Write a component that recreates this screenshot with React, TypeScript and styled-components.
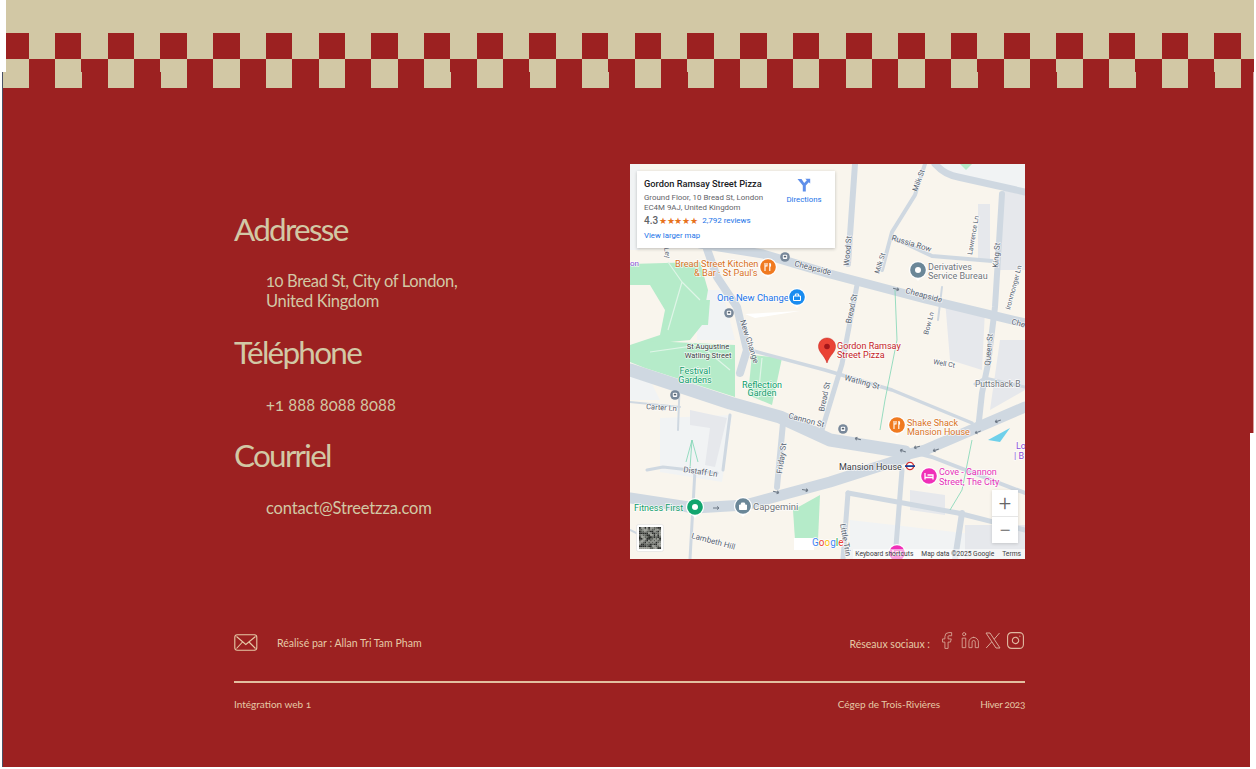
import React from "react";
import styled, { createGlobalStyle } from "styled-components";
import { Facebook, Linkedin, Instagram } from "lucide-react";

const RED = "#9c2121";
const BEIGE = "#d2c8a5";
const SOFT = "#e6c9a6";

const GlobalStyle = createGlobalStyle`
  html, body {
    margin: 0;
    padding: 0;
    background: #fff;
  }
  body {
    font-family: "Lato", "Liberation Sans", sans-serif;
  }
`;

const Page = styled.div`
  width: 1254px;
  height: 767px;
  display: flex;
  flex-direction: column;
`;

const Band = styled.div`
  height: 33px;
  margin-left: 6px;
  background: ${BEIGE};
`;

const checks = (a: string, b: string, offset: number) =>
  `repeating-linear-gradient(90deg, ${a} ${offset}px, ${a} ${offset + 26.35}px, ${b} ${offset + 26.35}px, ${b} ${offset + 52.7}px)`;

const CheckRow = styled.div<{ $h: number; $left: number; $a: string; $b: string; $offset: number }>`
  height: ${(p) => p.$h}px;
  margin-left: ${(p) => p.$left}px;
  background-color: ${(p) => p.$a};
  background-image: ${(p) => checks(p.$a, p.$b, p.$offset)};
`;

const FooterWrap = styled.footer`
  position: relative;
  flex: 1;
  margin-left: 2px;
  background: ${RED};
  border-left: 1px solid #4a5266;
  border-right: 1px solid #d99a9a;
  display: flex;
  flex-direction: column;
`;

const Notch = styled.div`
  position: absolute;
  right: -1px;
  top: 361px;
  bottom: 0;
  width: 4px;
  background: #fff;
`;

const Inner = styled.div`
  width: 791px;
  margin-left: 231px;
  display: flex;
  flex-direction: column;
`;

const Main = styled.div`
  display: flex;
  justify-content: space-between;
  margin-top: 76px;
`;

const Contact = styled.div`
  padding-top: 46px;
  display: flex;
  flex-direction: column;
  gap: 22px;
  color: ${BEIGE};
`;

const Heading = styled.h2`
  margin: 0;
  font-size: 31.5px;
  line-height: 38px;
  font-weight: 400;
  letter-spacing: -1.75px;
`;

const Detail = styled.p<{ $top: number; $bottom?: number; $track: number }>`
  margin: ${(p) => p.$top}px 0 ${(p) => p.$bottom ?? 0}px 32px;
  font-size: 16.5px;
  line-height: 20px;
  font-weight: 400;
  letter-spacing: ${(p) => p.$track}px;
  font-variant-numeric: oldstyle-nums;
`;

const MapFrame = styled.div`
  position: relative;
  width: 395px;
  height: 395px;
  overflow: hidden;
  background: #f9f5ed;
  font-family: "Roboto", "Liberation Sans", sans-serif;
`;

const MapArt = styled.svg`
  display: block;
  width: 395px;
  height: 395px;
`;

const InfoCard = styled.div`
  position: absolute;
  left: 7px;
  top: 7px;
  width: 198px;
  height: 77px;
  box-sizing: border-box;
  padding: 7px 7px;
  background: #fff;
  box-shadow: 0 1px 3px rgba(60, 64, 67, 0.3);
  display: flex;
  justify-content: space-between;
`;

const CardText = styled.div`
  display: flex;
  flex-direction: column;
`;

const PlaceName = styled.div`
  font-size: 9.25px;
  line-height: 12px;
  font-weight: 500;
  color: #202124;
  white-space: nowrap;
`;

const PlaceAddress = styled.div`
  margin-top: 3px;
  font-size: 7.9px;
  line-height: 10px;
  color: #5f6368;
  white-space: nowrap;
`;

const RatingRow = styled.div`
  margin-top: 1px;
  display: flex;
  align-items: center;
  height: 13px;
  font-size: 8px;
  color: #1a73e8;
`;

const Score = styled.span`
  font-size: 10px;
  font-weight: 500;
  color: #5f6368;
  margin-right: 1px;
`;

const Stars = styled.span`
  font-size: 8.6px;
  letter-spacing: -0.4px;
  color: #e7711b;
  margin-right: 5px;
`;

const MapLink = styled.div`
  margin-top: 4px;
  font-size: 7.8px;
  line-height: 10px;
  color: #1a73e8;
`;

const Directions = styled.div`
  width: 44px;
  display: flex;
  flex-direction: column;
  align-items: center;
  font-size: 7.8px;
  color: #1a73e8;
  gap: 3px;
  padding-right: 2px;
`;

const ZoomBox = styled.div`
  position: absolute;
  left: 362px;
  top: 326px;
  width: 26px;
  height: 53px;
  background: #fff;
  box-shadow: 0 1px 3px rgba(0, 0, 0, 0.15);
  display: flex;
  flex-direction: column;
`;

const ZoomButton = styled.div`
  flex: 1;
  display: flex;
  align-items: center;
  justify-content: center;
  font-size: 22px;
  font-weight: 300;
  color: #666;
  & + & {
    border-top: 1px solid #e6e6e6;
  }
`;

const Attribution = styled.div`
  position: absolute;
  right: 0;
  bottom: 0;
  height: 10px;
  display: flex;
  gap: 8px;
  padding: 0 4px 0 2px;
  background: rgba(255, 255, 255, 0.55);
  font-size: 6.7px;
  line-height: 10px;
  color: #3c4043;
  white-space: nowrap;
`;

const SocialRow = styled.div`
  display: flex;
  justify-content: space-between;
  align-items: center;
  height: 20px;
  margin-top: 73px;
  color: ${SOFT};
  font-size: 10.55px;
`;

const Credit = styled.div`
  display: flex;
  align-items: center;
  gap: 19px;
`;

const CreditText = styled.span`
  padding-top: 2px;
`;

const Socials = styled.div`
  display: flex;
  align-items: center;
  gap: 5px;
  margin-top: -4px;
`;

const SocialLabel = styled.span`
  margin: 8px 2px 0 0;
  font-size: 10.5px;
`;

const Rule = styled.hr`
  width: 100%;
  height: 2px;
  margin: 29px 0 0;
  border: 0;
  background: #e3bfa0;
`;

const BottomRow = styled.div`
  display: flex;
  justify-content: space-between;
  margin-top: 14px;
  font-size: 10px;
  line-height: 14px;
  color: ${SOFT};
  font-variant-numeric: oldstyle-nums;
`;

const RightGroup = styled.div`
  display: flex;
  gap: 40px;
`;

const Season = styled.span`
  letter-spacing: -0.3px;
`;

type Road = { d: string; w: number };

const roads: Road[] = [
  { d: "M700 244L763 254L830 274L925 299L1025 323", w: 9 },
  { d: "M935 164Q945 175 958 177L1025 192", w: 7 },
  { d: "M855 164L848 264", w: 6 },
  { d: "M857 285L842 364L822 430", w: 5 },
  { d: "M925 164L915 195L892 232L882 270", w: 4 },
  { d: "M892 237L932 256L992 261", w: 4 },
  { d: "M1002 194L995 307L988 364L982 393L978 430", w: 6 },
  { d: "M630 370L730 403L780 417L830 440L905 452", w: 13 },
  { d: "M905 455L925 450L1025 407", w: 11 },
  { d: "M630 498L695 508L745 505L830 482L905 458", w: 11 },
  { d: "M905 450L932 457L1025 493", w: 4 },
  { d: "M848 493L958 513L1025 530", w: 5 },
  { d: "M902 470L895 559", w: 5 },
  { d: "M962 513L955 559", w: 6 },
  { d: "M848 493L843 559", w: 5 },
  { d: "M707 249L717 277L737 307L747 350L740 373", w: 8 },
  { d: "M783 423L777 487", w: 6 },
  { d: "M730 415L723 470", w: 3 },
  { d: "M647 470L663 467L717 473", w: 3 },
  { d: "M695 470L690 559", w: 3 },
  { d: "M750 350L825 370L892 390L972 423", w: 3.5 },
  { d: "M1025 387L985 378L975 384", w: 3 },
  { d: "M630 402L680 407", w: 2 },
  { d: "M680 375L678 430", w: 2 },
  { d: "M942 287L938 320", w: 2 },
  { d: "M630 530L650 540", w: 2 },
];

type Label = {
  t: string;
  x: number;
  y: number;
  s?: number;
  c?: string;
  r?: number;
  mid?: boolean;
};

const ROAD_INK = "#56616e";
const ORANGE = "#d9731f";
const GREEN = "#0f9d6b";
const PINK = "#e62fb8";
const RED_INK = "#c5221f";
const GRAY_INK = "#70757a";

const labels: Label[] = [
  { t: "Bread Street Kitchen", x: 675, y: 267, s: 9.2, c: ORANGE },
  { t: "& Bar · St Paul's", x: 694, y: 276, s: 9.2, c: ORANGE },
  { t: "One New Change", x: 717, y: 301, s: 9.4, c: "#1a73e8" },
  { t: "St Augustine", x: 708, y: 349, s: 7.5, c: "#3c4043", mid: true },
  { t: "Watling Street", x: 708, y: 358, s: 7.5, c: "#3c4043", mid: true },
  { t: "Festival", x: 695, y: 374, s: 9, c: GREEN, mid: true },
  { t: "Gardens", x: 695, y: 383, s: 9, c: GREEN, mid: true },
  { t: "Reflection", x: 762, y: 388, s: 9, c: GREEN, mid: true },
  { t: "Garden", x: 762, y: 396, s: 9, c: GREEN, mid: true },
  { t: "Carter Ln", x: 646, y: 409, s: 7.5, r: 4 },
  { t: "Distaff Ln", x: 683, y: 472, s: 8, r: 8 },
  { t: "Fitness First", x: 634, y: 511, s: 9, c: GREEN },
  { t: "Capgemini", x: 753, y: 510, s: 9.5, c: GRAY_INK },
  { t: "Lambeth Hill", x: 691, y: 538, s: 8, r: 15 },
  { t: "Friday St", x: 782, y: 474, s: 8, r: -82 },
  { t: "Cannon St", x: 788, y: 418, s: 8, r: 15 },
  { t: "Wood St", x: 849, y: 266, s: 8, r: -85 },
  { t: "Bread St", x: 851, y: 324, s: 8, r: -78 },
  { t: "Bread St", x: 824, y: 412, s: 8, r: -78 },
  { t: "Milk St", x: 917, y: 192, s: 7.5, r: -70 },
  { t: "Milk St", x: 879, y: 274, s: 7, r: -72 },
  { t: "Russia Row", x: 891, y: 240, s: 8, r: 17 },
  { t: "Lawrence Ln", x: 972, y: 255, s: 7, r: -80 },
  { t: "King St", x: 998, y: 268, s: 8, r: -85 },
  { t: "Ironmonger Ln", x: 1010, y: 310, s: 7, r: -75 },
  { t: "Cheapside", x: 794, y: 266, s: 8, r: 14 },
  { t: "Cheapside", x: 905, y: 293, s: 8, r: 15 },
  { t: "Che", x: 1011, y: 324, s: 8, r: 15 },
  { t: "Bow Ln", x: 928, y: 335, s: 7, r: -75 },
  { t: "Queen St", x: 990, y: 366, s: 8, r: -85 },
  { t: "Well Ct", x: 933, y: 364, s: 7, r: 10 },
  { t: "Watling St", x: 844, y: 380, s: 8, r: 15 },
  { t: "Puttshack B", x: 975, y: 387, s: 8.5, c: GRAY_INK },
  { t: "Derivatives", x: 928, y: 270, s: 9, c: GRAY_INK },
  { t: "Service Bureau", x: 928, y: 279, s: 9, c: GRAY_INK },
  { t: "Gordon Ramsay", x: 837, y: 349, s: 9, c: RED_INK },
  { t: "Street Pizza", x: 837, y: 358, s: 9, c: RED_INK },
  { t: "Shake Shack", x: 907, y: 426, s: 9, c: ORANGE },
  { t: "Mansion House", x: 907, y: 435, s: 9, c: ORANGE },
  { t: "Mansion House", x: 839, y: 470, s: 9, c: "#3c4043" },
  { t: "Cove - Cannon", x: 939, y: 475, s: 9, c: PINK },
  { t: "Street, The City", x: 939, y: 485, s: 9, c: PINK },
  { t: "New Change", x: 740, y: 321, s: 8, r: 72 },
  { t: "Lo", x: 1016, y: 449, s: 9, c: "#8a4fd8" },
  { t: "| B", x: 1014, y: 459, s: 9, c: "#8a4fd8" },
  { t: "on", x: 630, y: 266, s: 8, c: "#8a4fd8" },
  { t: "Little Trin", x: 840, y: 524, s: 8, r: 80 },
  { t: "Ley", x: 664, y: 248, s: 7, r: 80 },
];

const markers = [
  { x: 768, y: 267, c: "#f07a20", g: "food" },
  { x: 797, y: 297, c: "#1a8cf0", g: "shop" },
  { x: 918, y: 270, c: "#6b8798", g: "dot" },
  { x: 897, y: 425, c: "#f07a20", g: "food" },
  { x: 929, y: 476, c: "#f02fb8", g: "bed" },
  { x: 695, y: 507, c: "#12a56e", g: "dot" },
  { x: 743, y: 506, c: "#6b8798", g: "shop" },
  { x: 897, y: 553, c: "#f02fb8", g: "bed" },
];

const transit = [
  [785, 257],
  [729, 313],
  [675, 395],
  [843, 429],
];

const arrows = [
  [896, 289, 196],
  [805, 490, 190],
  [776, 492, 195],
  [716, 508, 180],
  [858, 439, 15],
  [903, 451, 20],
  [917, 447, -15],
  [998, 421, -20],
  [978, 432, -22],
  [936, 450, -20],
  [1002, 518, 200],
];

// fake satellite thumbnail, a fixed pseudo-random mosaic
const thumb = Array.from({ length: 144 }, (_, i) => {
  const n = (i * i * 31 + i * 17 + (i % 13) * 211) % 97;
  return {
    x: 639 + (i % 12) * 1.83,
    y: 527 + Math.floor(i / 12) * 1.83,
    fill: n % 3 === 0 ? "#2b2d2a" : n % 3 === 1 ? "#5d605a" : "#8f918a",
  };
});

const MapDrawing: React.FC = () => (
  <MapArt viewBox="630 164 395 395" xmlns="http://www.w3.org/2000/svg">
    <rect x="630" y="164" width="395" height="395" fill="#f9f5ed" />
    {/* pale built-up blocks */}
    <g fill="#f1f3f4">
      <path d="M660 418L732 415L722 482L660 472Z" />
      <path d="M930 164H1025V195L958 178Z" />
      <path d="M850 520L1025 540V559H850Z" />
      <path d="M630 164H640V250H630Z" />
      <path d="M630 372L650 380L660 400H630Z" />
      <path d="M697 290L722 290L735 340H697Z" />
    </g>
    <g fill="#e6e8ec">
      <path d="M690 410L727 418L715 467L705 465L710 428L690 425Z" />
      <path d="M978 204H990V260H978Z" />
      <path d="M1003 190L1025 195V270H1000Z" />
      <path d="M945 300L985 310L982 370L950 360Z" />
      <path d="M910 490L945 495L945 515L910 510Z" />
      <path d="M1000 340H1025V390L990 410Z" />
      <path d="M965 525H1025V559H965Z" />
    </g>
    {/* parks */}
    <g fill="#b5ebc9">
      <path d="M630 264L700 262L708 290L702 325L690 340L640 345L630 352Z" />
      <path d="M630 340L735 345L735 397L645 368L630 362Z" />
      <path d="M752 355L782 358L772 405L748 395Z" />
      <path d="M793 510L820 495L818 540L795 540Z" />
      <path d="M960 164H972L966 170Z" />
    </g>
    <path d="M630 285L650 285L665 310L660 335L630 345Z" fill="#f9f5ed" />
    <path d="M700 300H710L708 325H700Z" fill="#b5ebc9" />
    <g fill="none" stroke="#dff5e7" strokeWidth="1.2">
      <path d="M668 262L682 282L668 330M682 282L700 300M650 352L700 345L730 370" />
      <path d="M762 358L758 398" />
    </g>
    <g fill="none" stroke="#cfd8e1" strokeLinecap="round" strokeLinejoin="round">
      {roads.map((r, i) => (
        <path key={i} d={r.d} strokeWidth={r.w} />
      ))}
    </g>
    <g fill="none" stroke="#7fd6b4" strokeWidth="0.8">
      <path d="M895 290L897 340L885 400L880 430" />
      <path d="M972 440L962 490L950 510" />
      <path d="M692 440L690 468M692 440L698 462M692 440L686 462" />
    </g>
    <path d="M745 314L800 311L755 318Z" fill="#fff" />
    <path d="M988 440L1010 428L1000 442Z" fill="#6fd0ea" />
    {arrows.map(([x, y, r], i) => (
      <path
        key={i}
        d="M-3 0H3M-3 0L-1 -1.6M-3 0L-1 1.6"
        transform={`translate(${x} ${y}) rotate(${r})`}
        fill="none"
        stroke="#6d7885"
        strokeWidth="1"
      />
    ))}
    {transit.map(([x, y], i) => (
      <g key={i}>
        <circle cx={x} cy={y} r="4.8" fill="#78889a" />
        <rect x={x - 2.2} y={y - 2.2} width="4.4" height="4.2" rx="1" fill="#fff" />
        <rect x={x - 1.2} y={y - 1.2} width="2.4" height="1.6" fill="#56616e" />
      </g>
    ))}
    {labels.map((l, i) => (
      <text
        key={i}
        x={l.x}
        y={l.y}
        fontSize={l.s ?? 8}
        fill={l.c ?? ROAD_INK}
        textAnchor={l.mid ? "middle" : "start"}
        stroke="#fff"
        strokeWidth="1.4"
        strokeOpacity="0.75"
        paintOrder="stroke"
        transform={l.r ? `rotate(${l.r} ${l.x} ${l.y})` : undefined}
      >
        {l.t}
      </text>
    ))}
    {markers.map((m, i) => (
      <g key={i} transform={`translate(${m.x} ${m.y})`}>
        <path d="M-8.5 2L0 11L8.5 2Z" fill="#fff" />
        <circle r="9" fill="#fff" />
        <circle r="7.8" fill={m.c} />
        {m.g === "dot" && <circle r="3" fill="#fff" />}
        {m.g === "food" && (
          <path d="M-3 -4V4M-1 -4V-1H-3M1.8 -4V4M1.8 -4Q3.4 -2 1.8 0" stroke="#fff" strokeWidth="1.1" fill="none" />
        )}
        {m.g === "shop" && <path d="M-3.5 -1H3.5V3.5H-3.5ZM-1.6 -1V-3H1.6V-1" stroke="#fff" strokeWidth="1" fill={m.c === "#6b8798" ? "#fff" : "none"} />}
        {m.g === "bed" && <path d="M-4 -3V3.5M-4 1.5H4V3.5M-1.5 -1H4V1.5" stroke="#fff" strokeWidth="1.3" fill="none" />}
      </g>
    ))}
    {/* underground roundel */}
    <circle cx="910" cy="466" r="3.6" fill="#fff" stroke="#d32f2f" strokeWidth="1.4" />
    <rect x="905" y="465.2" width="10" height="1.8" fill="#1a3e94" />
    {/* main place pin */}
    <path d="M827 338C822 338 818.5 342 818.5 346.5C818.5 352.5 824.5 355 827 363C829.5 355 835.5 352.5 835.5 346.5C835.5 342 832 338 827 338Z" fill="#ea4335" stroke="#c5221f" strokeWidth="0.5" />
    <circle cx="827" cy="346.5" r="2.8" fill="#a3171a" />
    {/* satellite thumbnail */}
    <rect x="636.5" y="524.5" width="27" height="27" rx="2" fill="#fff" stroke="#d8d8d8" strokeWidth="0.5" />
    {thumb.map((c, i) => (
      <rect key={i} x={c.x} y={c.y} width="1.9" height="1.9" fill={c.fill} />
    ))}
    <rect x="794" y="538" width="20" height="12" fill="#fff" />
    <text x="812" y="546" fontSize="10" stroke="#fff" strokeWidth="1.4" paintOrder="stroke">
      <tspan fill="#4285f4">G</tspan>
      <tspan fill="#ea4335">o</tspan>
      <tspan fill="#fbbc05">o</tspan>
      <tspan fill="#4285f4">g</tspan>
      <tspan fill="#34a853">l</tspan>
      <tspan fill="#ea4335">e</tspan>
    </text>
  </MapArt>
);

const EnvelopeIcon: React.FC = () => (
  <svg width="24" height="17" viewBox="0 0 24 17" fill="none" stroke={SOFT} strokeWidth="1.1">
    <rect x="0.8" y="0.8" width="22" height="15.4" rx="2.5" />
    <path d="M2.5 2.5L11.8 10.5L21.5 2.5M2.5 14.5L8.5 8M21.5 14.5L15 8" />
  </svg>
);

const XIcon: React.FC = () => (
  <svg width="16" height="17" viewBox="0 0 16 17" fill="none" stroke="#d9a898" strokeWidth="1">
    <path d="M1 1H5L15 16H11ZM14.5 1L9.2 7.2M6.6 10L1.2 16" />
  </svg>
);

const App: React.FC = () => (
  <>
    <GlobalStyle />
    <Page>
      <Band />
      <CheckRow $h={26} $left={6} $a={RED} $b={BEIGE} $offset={-3.65} />
      <CheckRow $h={13} $left={6} $a={BEIGE} $b={RED} $offset={-3.65} />
      <FooterWrap>
        <CheckRow $h={16} $left={0} $a={BEIGE} $b={RED} $offset={-0.4} />
        <Notch />
        <Inner>
          <Main>
            <Contact>
              <Heading>Addresse</Heading>
              <Detail $top={1} $track={-0.35}>
                10 Bread St, City of London,
                <br />
                United Kingdom
              </Detail>
              <Heading>Téléphone</Heading>
              <Detail $top={2} $bottom={-1} $track={0.1}>
                +1 888 8088 8088
              </Detail>
              <Heading>Courriel</Heading>
              <Detail $top={2} $track={-0.16}>
                contact@Streetzza.com
              </Detail>
            </Contact>
            <MapFrame>
              <MapDrawing />
              <InfoCard>
                <CardText>
                  <PlaceName>Gordon Ramsay Street Pizza</PlaceName>
                  <PlaceAddress>
                    Ground Floor, 10 Bread St, London
                    <br />
                    EC4M 9AJ, United Kingdom
                  </PlaceAddress>
                  <RatingRow>
                    <Score>4.3</Score>
                    <Stars>★★★★★</Stars>
                    2,792 reviews
                  </RatingRow>
                  <MapLink>View larger map</MapLink>
                </CardText>
                <Directions>
                  <svg width="14" height="14" viewBox="0 0 14 14" fill="#5f8fea">
                    <path d="M0.5 1L4.5 1L7.2 5L9.8 2.2L8.3 0.8H13.2V5.6L11.8 4.2L8.8 7.4V13.5H5.8V7.6Z" />
                  </svg>
                  Directions
                </Directions>
              </InfoCard>
              <ZoomBox>
                <ZoomButton>+</ZoomButton>
                <ZoomButton>−</ZoomButton>
              </ZoomBox>
              <Attribution>
                <span>Keyboard shortcuts</span>
                <span>Map data ©2025 Google</span>
                <span>Terms</span>
              </Attribution>
            </MapFrame>
          </Main>
          <SocialRow>
            <Credit>
              <EnvelopeIcon />
              <CreditText>Réalisé par : Allan Tri Tam Pham</CreditText>
            </Credit>
            <Socials>
              <SocialLabel>Réseaux sociaux :</SocialLabel>
              <Facebook size={19} strokeWidth={1.1} color="#d9a898" />
              <Linkedin size={19} strokeWidth={1.1} color="#d9a898" />
              <XIcon />
              <Instagram size={19} strokeWidth={1.4} color="#e0b8a0" />
            </Socials>
          </SocialRow>
          <Rule />
          <BottomRow>
            <span>Intégration web 1</span>
            <RightGroup>
              <span>Cégep de Trois-Rivières</span>
              <Season>Hiver 2023</Season>
            </RightGroup>
          </BottomRow>
        </Inner>
      </FooterWrap>
    </Page>
  </>
);

export default App;
